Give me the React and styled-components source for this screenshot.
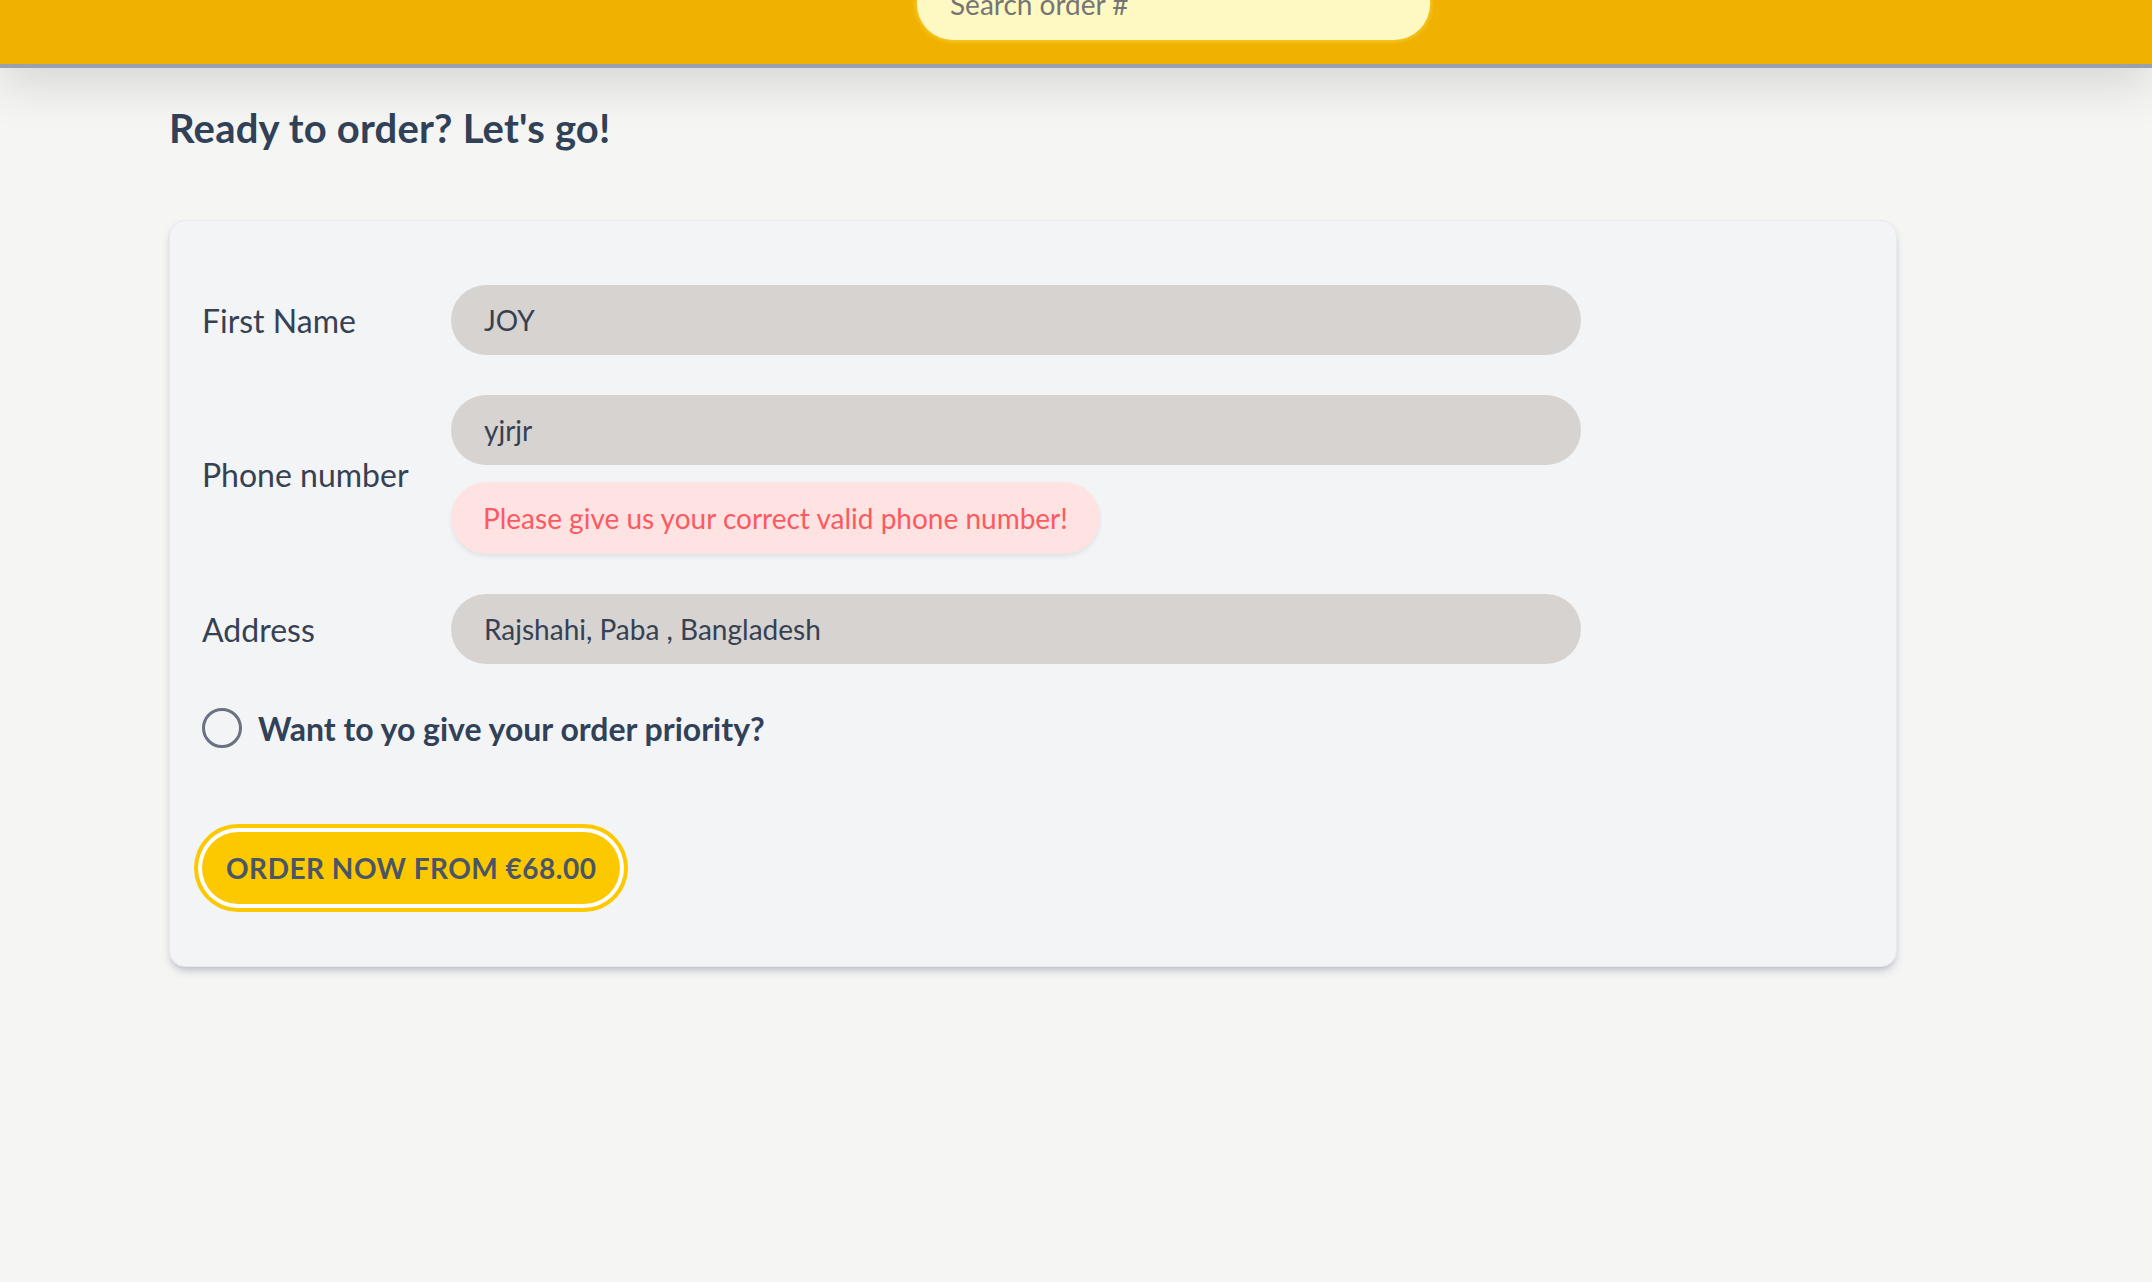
import React from 'react';
import styled, { createGlobalStyle } from 'styled-components';

const GlobalStyle = createGlobalStyle`
    * {
        box-sizing: border-box;
    }
    body {
        margin: 0;
        background: #f5f5f4;
        font-family: Lato, "Noto Sans", sans-serif;
        color: #364153;
    }
`;

const Page = styled.div`
    min-height: 100vh;
    background: #f5f5f4;
`;
const Header = styled.header`
    position: relative;
    z-index: 1;
    display: flex;
    align-items: flex-end;
    height: 68px;
    padding: 0 0 24px 917px;
    background: #f0b100;
    border-bottom: 4px solid #99a1af;
    box-shadow: 0 16px 50px rgba(0, 0, 0, 0.13);
`;
const Search = styled.input`
    flex: 0 0 513px;
    height: 72px;
    padding: 0 33px;
    border: none;
    border-radius: 999px;
    background: #fef9c2;
    box-shadow: 0 0 6px rgba(253, 224, 71, 0.9);
    font-family: inherit;
    font-size: 28px;
    color: #44403c;
    outline: none;

    ::placeholder {
        color: #a6a09b;
    }
`;
const Main = styled.main`
    padding: 32px 169px 0;
`;
const Title = styled.h2`
    margin: 0 0 64px;
    font-size: 40px;
    line-height: 56px;
    font-weight: 700;
    letter-spacing: 0.2px;
    color: #314158;
`;
const Card = styled.form`
    width: 1728px;
    padding: 64px 32px 62px;
    background: #f3f4f6;
    border: 1px solid #e8e9ec;
    border-radius: 16px;
    box-shadow: 0 6px 10px -2px rgba(60, 70, 100, 0.22), 0 3px 6px -3px rgba(60, 70, 100, 0.2);
`;
const Row = styled.div`
    display: flex;
    align-items: center;
    margin-bottom: 40px;
`;
const Label = styled.label`
    flex: 0 0 249px;
    font-size: 32px;
    color: #364153;
`;
const Field = styled.div`
    display: flex;
    flex-direction: column;
    gap: 17px;
    width: 1130px;
`;
const Input = styled.input`
    width: 1130px;
    height: 70px;
    padding: 0 33px;
    border: none;
    border-radius: 999px;
    background: #d6d3d1;
    font-family: inherit;
    font-size: 28px;
    color: #364153;
    outline: none;
`;
const Error = styled.p`
    align-self: flex-start;
    margin: 0;
    height: 72px;
    display: flex;
    align-items: center;
    padding: 0 32px;
    border-radius: 36px;
    background: #ffe2e2;
    box-shadow: 0 3px 4px rgba(0, 0, 0, 0.07);
    font-size: 28px;
    color: #fb5a60;
`;
const CheckRow = styled.div`
    display: flex;
    align-items: center;
    gap: 16px;
    height: 48px;
`;
const Check = styled.input`
    appearance: none;
    width: 40px;
    height: 40px;
    margin: 0;
    border: 3.5px solid #6a7282;
    border-radius: 50%;
    background: transparent;
`;
const CheckLabel = styled.label`
    font-size: 32px;
    font-weight: 700;
    color: #314158;
`;
const Actions = styled.div`
    margin-top: 80px;
`;
const Button = styled.button`
    height: 72px;
    padding: 0 24px;
    border: none;
    border-radius: 999px;
    background: #fcc800;
    box-shadow: 0 0 0 4px #ffffff, 0 0 0 8px #fcc800;
    font-family: inherit;
    font-size: 28px;
    font-weight: 700;
    letter-spacing: 0.5px;
    text-transform: uppercase;
    color: #4a5565;
`;

//*********************************
const App = () => {
    return (
        <Page>
            <GlobalStyle/>
            <Header>
                <Search placeholder="Search order #"/>
            </Header>
            <Main>
                <Title>Ready to order? Let's go!</Title>
                <Card onSubmit={e => e.preventDefault()}>
                    <Row>
                        <Label>First Name</Label>
                        <Input defaultValue="JOY"/>
                    </Row>
                    <Row>
                        <Label>Phone number</Label>
                        <Field>
                            <Input defaultValue="yjrjr"/>
                            <Error>Please give us your correct valid phone number!</Error>
                        </Field>
                    </Row>
                    <Row>
                        <Label>Address</Label>
                        <Input defaultValue="Rajshahi, Paba , Bangladesh"/>
                    </Row>
                    <CheckRow>
                        <Check type="checkbox" id="priority"/>
                        <CheckLabel htmlFor="priority">Want to yo give your order priority?</CheckLabel>
                    </CheckRow>
                    <Actions>
                        <Button>Order now from €68.00</Button>
                    </Actions>
                </Card>
            </Main>
        </Page>
    );
}
export default App;
